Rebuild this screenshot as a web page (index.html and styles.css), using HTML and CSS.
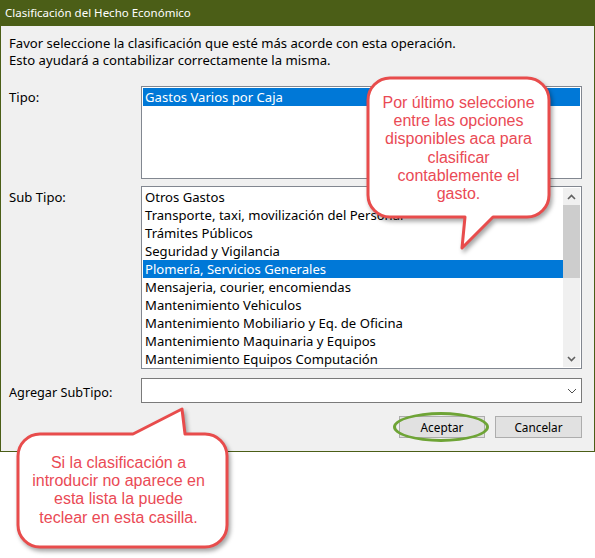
FILE: index.html
```html
<!DOCTYPE html>
<html lang="es">
<head>
<meta charset="utf-8">
<title>Clasificación del Hecho Económico</title>
<link rel="stylesheet" href="styles.css">
</head>
<body>
<div class="window">
  <div class="titlebar">Clasificación del Hecho Económico</div>
  <div class="content">
    <p class="intro">Favor seleccione la clasificación que esté más acorde con esta operación.<br>Esto ayudará a contabilizar correctamente la misma.</p>
    <div class="row row-tipo">
      <div class="label">Tipo:</div>
      <div class="listbox listbox-tipo">
        <div class="item selected">Gastos Varios por Caja</div>
      </div>
    </div>
    <div class="row row-subtipo">
      <div class="label">Sub Tipo:</div>
      <div class="listbox listbox-sub">
        <div class="items">
          <div class="item">Otros Gastos</div>
          <div class="item">Transporte, taxi, movilización del Personal</div>
          <div class="item">Trámites Públicos</div>
          <div class="item">Seguridad y Vigilancia</div>
          <div class="item selected">Plomería, Servicios Generales</div>
          <div class="item">Mensajeria, courier, encomiendas</div>
          <div class="item">Mantenimiento Vehiculos</div>
          <div class="item">Mantenimiento Mobiliario y Eq. de Oficina</div>
          <div class="item">Mantenimiento Maquinaria y Equipos</div>
          <div class="item">Mantenimiento Equipos Computación</div>
        </div>
        <div class="scrollbar">
          <div class="arrow"><svg width="9" height="6" viewBox="0 0 9 6"><path d="M1 5 L4.5 1.5 L8 5" fill="none" stroke="#606060" stroke-width="1.6"/></svg></div>
          <div class="track"><div class="thumb"></div></div>
          <div class="arrow"><svg width="9" height="6" viewBox="0 0 9 6"><path d="M1 1 L4.5 4.5 L8 1" fill="none" stroke="#606060" stroke-width="1.6"/></svg></div>
        </div>
      </div>
    </div>
    <div class="row row-agregar">
      <div class="label">Agregar SubTipo:</div>
      <div class="combo">
        <svg class="chev" width="10" height="6" viewBox="0 0 10 6"><path d="M1 1 L5 5 L9 1" fill="none" stroke="#505050" stroke-width="1"/></svg>
      </div>
    </div>
    <div class="buttons">
      <div class="btn btn-ok">Aceptar<span class="ring"></span></div>
      <div class="btn">Cancelar</div>
    </div>
  </div>
</div>

<svg class="callouts" width="595" height="558" viewBox="0 0 595 558">
  <path class="bubble" d="M390,78 H527 A22 22 0 0 1 549,100 V195 A22 22 0 0 1 527,217 H493 L462,248 L465,217 H390 A22 22 0 0 1 368,195 V100 A22 22 0 0 1 390,78 Z"/>
  <path class="bubble" d="M40,434 H133 L182,409 L185,434 H205 A22 22 0 0 1 227,456 V525 A22 22 0 0 1 205,547 H40 A22 22 0 0 1 18,525 V456 A22 22 0 0 1 40,434 Z"/>
</svg>
<div class="callout-text callout-1">Por último seleccione<br>entre las opciones<br>disponibles aca para<br>clasificar<br>contablemente el<br>gasto.</div>
<div class="callout-text callout-2">Si la clasificación a<br>introducir no aparece en<br>esta lista la puede<br>teclear en esta casilla.</div>
</body>
</html>
```
FILE: styles.css
```css
html, body {
  margin: 0;
  padding: 0;
  background: #ffffff;
}
body {
  position: relative;
  width: 595px;
  height: 558px;
  overflow: hidden;
  font-family: "Noto Sans", "Open Sans", sans-serif;
  font-size: 13.1px;
  color: #000;
}
.window {
  box-sizing: border-box;
  width: 595px;
  height: 452px;
  background: #f0f0f0;
  border-left: 1px solid #4b5e17;
  border-right: 1px solid #4b5e17;
  border-bottom: 1px solid #4b5e17;
}
.titlebar {
  height: 26px;
  margin: 0 -1px;
  padding-left: 5px;
  background: #4b5e17;
  color: #ffffff;
  line-height: 25px;
  font-size: 11.5px;
}
.content {
  padding: 9px 11px 0 8px;
}
.intro {
  margin: 0;
  line-height: 17px;
}
.row {
  display: flex;
  align-items: flex-start;
}
.label {
  width: 132px;
  flex: none;
  line-height: 18px;
  padding-top: 2px;
}
.row-tipo { margin-top: 17px; }
.row-subtipo { margin-top: 7px; }
.row-agregar { margin-top: 9px; align-items: center; }
.row-agregar .label { padding-top: 3px; font-size: 12.7px; }

.listbox {
  box-sizing: border-box;
  width: 441px;
  background: #ffffff;
  border: 1px solid #828790;
  padding: 1px;
}
.listbox-tipo { height: 93px; }
.listbox-sub {
  height: 183px;
  display: flex;
}
.items { flex: 1; overflow: hidden; }
.item {
  height: 18px;
  line-height: 18px;
  padding-left: 2px;
  white-space: nowrap;
  overflow: hidden;
}
.item.selected {
  background: #0078d7;
  color: #ffffff;
}
.scrollbar {
  width: 17px;
  flex: none;
  background: #f0f0f0;
  display: flex;
  flex-direction: column;
}
.arrow {
  height: 17px;
  display: flex;
  align-items: center;
  justify-content: center;
}
.track { flex: 1; }
.thumb {
  height: 73px;
  background: #cdcdcd;
}
.combo {
  box-sizing: border-box;
  width: 441px;
  height: 25px;
  background: #ffffff;
  border: 1px solid #7a7a7a;
  display: flex;
  align-items: center;
  justify-content: flex-end;
  padding-right: 4px;
}
.buttons {
  display: flex;
  justify-content: flex-end;
  gap: 10px;
  margin-top: 13px;
  margin-right: 1px;
}
.btn {
  box-sizing: border-box;
  position: relative;
  width: 87px;
  height: 22px;
  line-height: 20px;
  text-align: center;
  background: #e1e1e1;
  border: 1px solid #adadad;
  font-size: 11.8px;
}
.btn-ok { width: 86px; }
.ring {
  position: absolute;
  left: -7px;
  top: -5px;
  width: 96px;
  height: 30px;
  box-sizing: border-box;
  border: 3px solid #6ea436;
  border-radius: 50%;
}
.callouts {
  position: absolute;
  left: 0;
  top: 0;
  overflow: visible;
  filter: drop-shadow(2px 3px 2px rgba(0, 0, 0, 0.35));
}
.bubble {
  fill: #ffffff;
  stroke: #e84c4c;
  stroke-width: 3;
  stroke-linejoin: round;
}
.callout-text {
  position: absolute;
  font-family: "Liberation Sans", Arial, sans-serif;
  font-size: 16px;
  line-height: 18.2px;
  color: #ea4a55;
  text-align: center;
}
.callout-1 {
  left: 368px;
  top: 94px;
  width: 181px;
}
.callout-2 {
  left: 18px;
  top: 454px;
  width: 201px;
}
```
